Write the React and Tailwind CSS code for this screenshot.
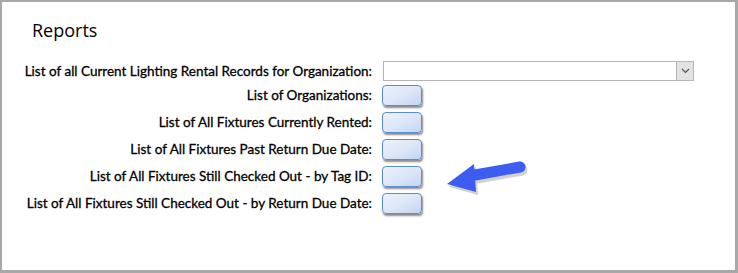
const rows = [
  "List of Organizations:",
  "List of All Fixtures Currently Rented:",
  "List of All Fixtures Past Return Due Date:",
  "List of All Fixtures Still Checked Out - by Tag ID:",
  "List of All Fixtures Still Checked Out - by Return Due Date:",
];

const ReportButton = () => (
  <button className="block w-[40px] h-[21px] rounded-[4px] border border-[#5b8bd0] bg-gradient-to-br from-[#edf2fc] via-[#dde7f8] to-[#c3d5f3] shadow-[1px_2px_2px_rgba(0,0,0,0.45)]" />
);

const Arrow = () => (
  <svg width="90" height="40" viewBox="0 0 90 40" className="absolute left-[439px] top-[156px]">
    <g transform="translate(2 3)" fill="#9a9a9a" opacity="0.45">
      <path d="M79 9 L34 17" stroke="#9a9a9a" strokeWidth="11" strokeLinecap="round" />
      <polygon points="6,26 33,6 35,34" />
    </g>
    <path d="M79 9 L34 17" stroke="#3d5cf0" strokeWidth="11" strokeLinecap="round" />
    <polygon points="6,26 33,6 35,34" fill="#3d5cf0" />
  </svg>
);

export default function App() {
  return (
    <div className="relative w-[738px] h-[273px] bg-white border-2 border-r-[3px] border-b-[3px] border-[#a8a8a8] font-['Lato','Liberation_Sans',sans-serif] text-black">
      <h1 className="pl-[30px] pt-[16px] text-[18px] leading-[24px] font-['Open_Sans','Liberation_Sans',sans-serif]">
        Reports
      </h1>
      <div className="mt-[19px] grid grid-cols-[370px_1fr] gap-x-[10px] items-center text-[13.5px] [-webkit-text-stroke:0.3px_black]">
        <div className="text-right h-[20px] leading-[20px]">
          List of all Current Lighting Rental Records for Organization:
        </div>
        <div className="ml-[1px] flex h-[20px] w-[311px] border border-[#b5b5b5] bg-white">
          <div className="flex-1" />
          <div className="w-[17px] h-full bg-[#e3e3e3] border-l border-[#b5b5b5] flex items-center justify-center">
            <svg width="9" height="6" viewBox="0 0 9 6">
              <path d="M1 1 L4.5 4.5 L8 1" stroke="#555" strokeWidth="1.2" fill="none" />
            </svg>
          </div>
        </div>
        {rows.map((r, i) => (
          <div key={r} className="contents">
            <div className={`text-right h-[21px] leading-[21px] ${i === 0 ? "mt-[4px]" : "mt-[6px]"}`}>{r}</div>
            <div className={`flex h-[21px] ${i === 0 ? "mt-[4px]" : "mt-[6px]"}`}>
              <ReportButton />
            </div>
          </div>
        ))}
      </div>
      <Arrow />
    </div>
  );
}
